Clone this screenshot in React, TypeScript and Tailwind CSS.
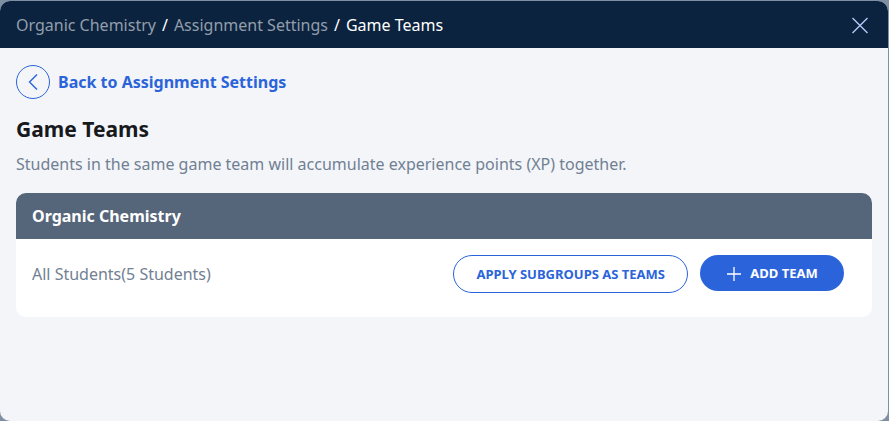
export default function App() {
  return (
    <div className="min-h-screen bg-[#7e8fa1] pt-px pr-px font-['Noto_Sans',sans-serif]">
      <main className="flex min-h-[calc(100vh-1px)] flex-col overflow-hidden rounded-[10px] bg-[#f3f5f9]">
        <header className="flex h-[47px] items-center justify-between bg-[#0c233f] px-4">
          <nav aria-label="Breadcrumb" className="flex gap-[6px] pt-px text-base text-white">
            <a href="#course" className="text-[#929eab]">Organic Chemistry</a>
            <span>/</span>
            <a href="#settings" className="text-[#929eab]">Assignment Settings</a>
            <span>/</span>
            <span>Game Teams</span>
          </nav>
          <button type="button" aria-label="Close" className="text-[#b4cbfa]">
            <svg width="24" height="24" viewBox="0 0 24 24" fill="none" stroke="currentColor" strokeWidth="1.4"><path d="M4.5 5 19.5 20M19.5 5 4.5 20" /></svg>
          </button>
        </header>
        <div className="px-4 pt-[17px] pb-4">
          <a href="#back" className="flex items-center gap-2 font-bold text-[#2b64da]">
            <span className="flex size-[34px] items-center justify-center rounded-full border border-[#2b64da]">
              <svg width="24" height="24" viewBox="0 0 24 24" fill="none" stroke="currentColor" strokeWidth="1.4"><path d="M16 4.5 8.5 12l7.5 7.5" /></svg>
            </span>
            Back to Assignment Settings
          </a>
          <h1 className="mt-4 text-[21px] leading-7 font-bold text-[#17191d]">Game Teams</h1>
          <p className="mt-[9px] text-base leading-6 text-[#718093]">Students in the same game team will accumulate experience points (XP) together.</p>
          <section className="mt-[17px] overflow-hidden rounded-[10px] bg-white">
            <h2 className="bg-[#55657a] px-4 py-[11px] text-base leading-6 font-bold text-white">Organic Chemistry</h2>
            <div className="flex items-start justify-between pt-4 pr-7 pb-6 pl-4">
              <p className="py-[7px] text-base leading-6 text-[#718093]">All Students(5 Students)</p>
              <div className="flex items-start gap-3">
                <button type="button" className="h-[38px] rounded-full border border-[#2b64da] px-[22px] pt-px text-[13px] font-bold text-[#2b64da]">APPLY SUBGROUPS AS TEAMS</button>
                <button type="button" className="flex h-9 w-36 items-center justify-center gap-2 rounded-full bg-[#2b64da] pt-px text-[13px] font-bold text-white">
                  <svg width="16" height="16" viewBox="0 0 16 16" fill="none" stroke="currentColor" strokeWidth="1.3"><path d="M8 1v14M1 8h14" /></svg>
                  ADD TEAM
                </button>
              </div>
            </div>
          </section>
        </div>
      </main>
    </div>
  );
}
